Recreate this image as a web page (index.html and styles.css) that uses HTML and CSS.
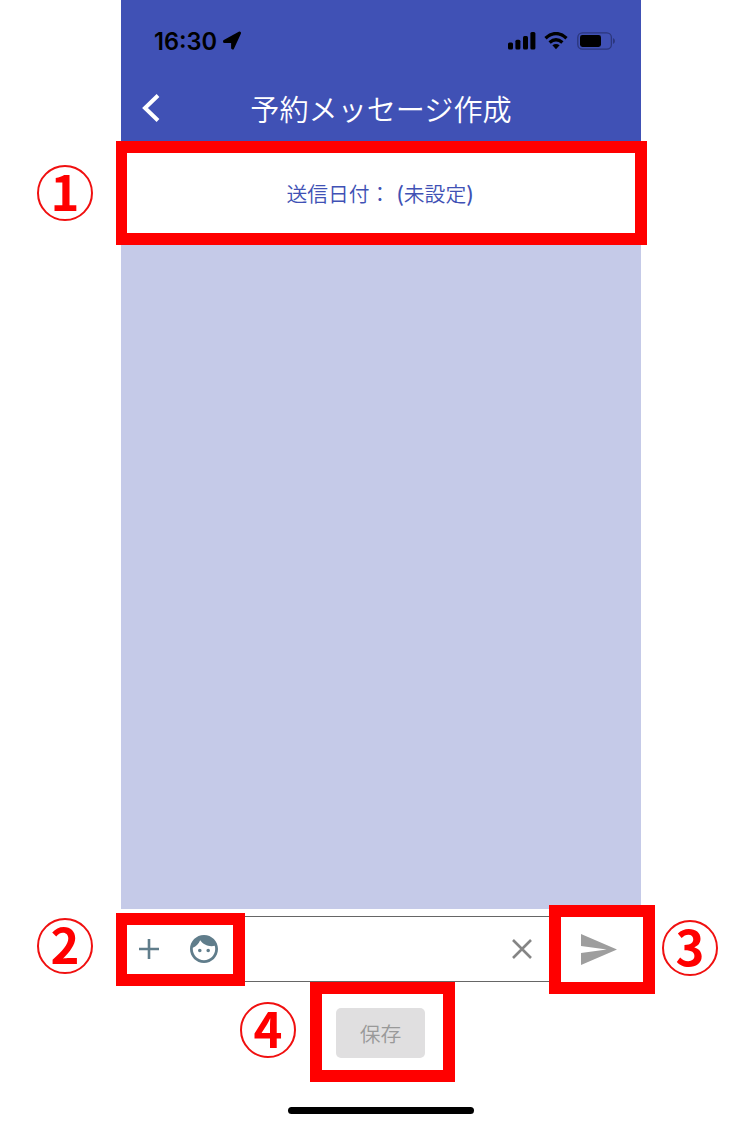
FILE: index.html
```html
<!DOCTYPE html>
<html lang="ja">
<head>
<meta charset="utf-8">
<title>予約メッセージ作成</title>
<link rel="stylesheet" href="styles.css">
</head>
<body>
<div class="page">
  <main class="phone">
    <header class="header">
      <div class="status">
        <span class="time">16:30</span>
        <svg class="location" viewBox="0 0 20 20"><path d="M17.500 2L10.600 17V10.400H2.500Z"/></svg>
        <svg class="signal" viewBox="0 0 28 18"><rect x="0" y="10.5" width="5" height="7" rx="1.5"/><rect x="7.4" y="7.8" width="5" height="9.7" rx="1.5"/><rect x="15" y="4" width="5" height="13.5" rx="1.5"/><rect x="22.4" y="0" width="5" height="17.5" rx="1.5"/></svg>
        <svg class="wifi" viewBox="0 0 24 18"><path class="arc" d="M1.500 6.200Q12-3 22.500 6.200M5.600 10.500Q12 5 18.400 10.500"/><path d="M8.400 13.300Q12 10.800 15.600 13.300L12 17.200Z"/></svg>
        <svg class="battery" viewBox="0 0 39 18"><rect class="shell" x=".8" y=".8" width="33.6" height="16.4" rx="4.6"/><rect x="3" y="3" width="21" height="12" rx="2.4"/><path class="tip" d="M36 6Q38 7 38 9T36 12Z"/></svg>
      </div>
      <div class="titlebar">
        <svg class="back" viewBox="0 0 18 28"><path d="M16 1.5L3 14L16 26.5"/></svg>
        <h1 class="title">予約メッセージ作成</h1>
      </div>
    </header>
    <div class="date"><span>送信日付：</span><span><b>(</b>未設定<b>)</b></span></div>
    <section class="messages"></section>
    <div class="composer">
      <div class="field">
        <svg class="plus" viewBox="0 0 20 20"><path d="M10 0V20M0 10H20"/></svg>
        <svg class="face" viewBox="2 2 20 20"><path d="M9 11.750c-.69 0-1.250.56-1.250 1.250s.56 1.250 1.250 1.250 1.250-.56 1.250-1.250-.56-1.250-1.250-1.250zm6 0c-.69 0-1.250.56-1.250 1.250s.56 1.250 1.250 1.250 1.250-.56 1.250-1.250-.56-1.250-1.250-1.250zM12 2C6.480 2 2 6.480 2 12s4.480 10 10 10 10-4.480 10-10S17.520 2 12 2zm0 18c-4.410 0-8-3.590-8-8 0-.29.02-.58.05-.86 2.360-1.050 4.230-2.980 5.210-5.370C11.070 8.330 14.050 10 17.420 10c.78 0 1.530-.09 2.250-.26.21.71.33 1.470.33 2.260 0 4.410-3.590 8-8 8z"/></svg>
        <svg class="clear" viewBox="0 0 20 20"><path d="M1 1L19 19M19 1L1 19"/></svg>
      </div>
      <svg class="send" viewBox="2 3 21 18" preserveAspectRatio="none"><path d="M2.010 21L23 12 2.010 3 2 10l15 2-15 2z"/></svg>
    </div>
    <button class="save" disabled>保存</button>
    <div class="home"></div>
  </main>
  <div class="mark mark-date"></div>
  <div class="mark mark-tools"></div>
  <div class="mark mark-send"></div>
  <div class="mark mark-save"></div>
  <div class="num num-date">1</div>
  <div class="num num-tools">2</div>
  <div class="num num-send">3</div>
  <div class="num num-save">4</div>
</div>
</body>
</html>
```
FILE: styles.css
```css
* { box-sizing: border-box; }
body {
  margin: 0;
  background: #fff;
  font-family: "Noto Sans CJK JP", "Noto Sans", sans-serif;
}
svg { display: block; flex: none; }
.page { position: relative; width: 755px; height: 1125px; overflow: hidden; }
.phone {
  display: flex;
  flex-direction: column;
  width: 520px;
  height: 1125px;
  margin-left: 121px;
}
.header { height: 148px; background: #4051b5; }
.status {
  display: flex;
  align-items: center;
  height: 82px;
  padding: 0 25px 0 33px;
}
.time {
  width: 62px;
  padding-top: 1px;
  font: 560 23.6px/28px Inter, sans-serif;
  white-space: nowrap;
}
.location { width: 20px; height: 20px; margin-left: 6px; }
.location path { stroke: #000; stroke-width: 3; stroke-linejoin: round; }
.signal { width: 28px; height: 18px; margin-left: auto; }
.wifi { width: 24px; height: 18px; margin-left: 8px; }
.arc { fill: none; stroke: #000; stroke-width: 3.4; }
.battery { width: 39px; height: 18px; margin-left: 9px; }
.shell { fill: none; stroke: #2b367c; stroke-width: 1.3; }
.tip { fill: #2b367c; }
.titlebar {
  display: grid;
  grid-template-columns: 60px 1fr 60px;
  align-items: center;
  height: 52px;
}
.back { width: 18px; height: 28px; margin-left: 21px; }
.back path { fill: none; stroke: #fff; stroke-width: 4; }
.title {
  margin: 0;
  color: #fff;
  font-size: 29.1px;
  font-weight: 350;
  line-height: 52px;
  text-align: center;
  white-space: nowrap;
}
.date {
  display: flex;
  justify-content: center;
  gap: 6px;
  height: 92px;
  padding: 30px 2px 0 0;
  color: #4051b5;
  font-size: 20.8px;
  font-weight: 350;
  line-height: 30px;
}
.date b { font-weight: 500; }
.messages { height: 669px; background: #c5cae8; }
.composer {
  display: flex;
  align-items: center;
  height: 66px;
  margin-top: 7px;
}
.field {
  display: flex;
  align-items: center;
  width: 435px;
  height: 66px;
  padding: 0 24px 0 18px;
  border-top: 1px solid #666;
  border-bottom: 1px solid #666;
}
.plus { width: 20px; height: 20px; }
.plus path { fill: none; stroke: #607d8b; stroke-width: 2.6; }
.face { width: 28px; height: 28px; margin-left: 31px; fill: #607d8b; }
.clear { width: 20px; height: 20px; margin-left: auto; }
.clear path { fill: none; stroke: #858585; stroke-width: 2.6; }
.send { width: 36px; height: 31px; margin-left: 25px; fill: #9e9e9e; }
.save {
  align-self: center;
  width: 89px;
  height: 50px;
  margin-top: 26px;
  margin-right: 1px;
  padding: 0;
  border: 0;
  border-radius: 5px;
  background: #e0dfe0;
  color: #999;
  font: 350 20.8px/50px "Noto Sans CJK JP", sans-serif;
}
.home {
  align-self: center;
  width: 186px;
  height: 7px;
  margin-top: 49px;
  border-radius: 4px;
  background: #000;
}
.mark { position: absolute; border: 12px solid #f00; }
.mark-date { left: 116px; top: 141px; width: 531px; height: 104px; border-left-width: 11px; }
.mark-tools { left: 116px; top: 913px; width: 129px; height: 73px; border-left-width: 11px; }
.mark-send { left: 549px; top: 905px; width: 106px; height: 89px; }
.mark-save { left: 310px; top: 982px; width: 145px; height: 100px; }
.num {
  position: absolute;
  width: 56px;
  height: 56px;
  border: 2px solid #f01010;
  border-radius: 50%;
  color: #f00;
  font-size: 49px;
  font-weight: 700;
  line-height: 46px;
  text-align: center;
}
.num-date { left: 37px; top: 165px; }
.num-tools { left: 37px; top: 918px; }
.num-send { left: 662px; top: 920px; }
.num-save { left: 240px; top: 1002px; }
```
